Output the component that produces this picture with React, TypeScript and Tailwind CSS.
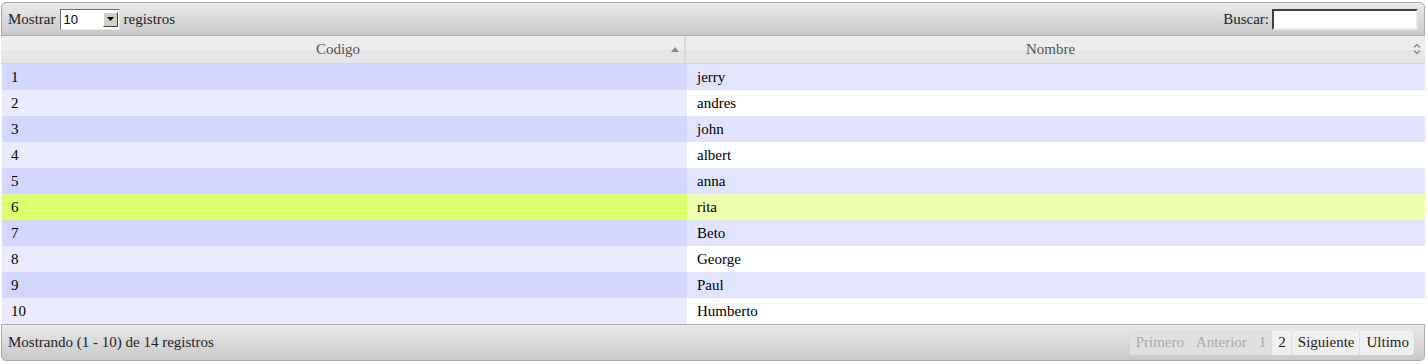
import React from "react";

const rows = [
  ["1", "jerry"],
  ["2", "andres"],
  ["3", "john"],
  ["4", "albert"],
  ["5", "anna"],
  ["6", "rita"],
  ["7", "Beto"],
  ["8", "George"],
  ["9", "Paul"],
  ["10", "Humberto"],
];

export default function App() {
  return (
    <div className="w-[1428px] h-[364px] bg-white pt-[2px] pl-[1px] text-[15px] leading-[17px] text-[#222] font-['Liberation_Serif','Times_New_Roman',serif]">
      <div className="w-[1424px]">
        {/* top toolbar */}
        <div className="h-[34px] flex items-center justify-between pl-[6px] pr-[6px] border border-[#aaaaaa] rounded-t-[5px] bg-[linear-gradient(#eaeaea,#c9c9c9)]">
          <div className="flex items-center gap-[4px]">
            <span>Mostrar</span>
            <div className="w-[60px] h-[21px] bg-white border border-t-[#6e6e6e] border-l-[#6e6e6e] border-b-[#e8e8e8] border-r-[#e8e8e8] flex items-center justify-between pl-[3px] pr-[1px]">
              <span className="text-[13px] text-black font-['Liberation_Sans',Arial,sans-serif]">10</span>
              <div className="w-[15px] h-[15px] bg-[#d4d0c8] border border-t-white border-l-white border-b-[#404040] border-r-[#404040] flex items-center justify-center">
                <svg width="7" height="4" viewBox="0 0 7 4"><path d="M0 0h7L3.5 4z" fill="#000" /></svg>
              </div>
            </div>
            <span>registros</span>
          </div>
          <div className="flex items-center gap-[3px]">
            <span>Buscar:</span>
            <div className="w-[146px] h-[21px] bg-white border-2 border-t-[#404040] border-l-[#404040] border-b-[#e8e8e8] border-r-[#e8e8e8]" />
          </div>
        </div>
        {/* header */}
        <div className="flex h-[28px] border-b border-[#d3d3d3] bg-[linear-gradient(#ededed_0%,#ededed_50%,#e6e6e6_50%,#e6e6e6_100%)] text-[#555]">
          <div className="w-[684px] ml-[1px] pr-[10px] flex items-center justify-center relative border-r-2 border-[#d8d8d8]">
            <span>Codigo</span>
            <svg className="absolute right-[5px] top-[11px]" width="8" height="5" viewBox="0 0 8 5"><path d="M0 5L4 0L8 5z" fill="#888" /></svg>
          </div>
          <div className="flex-1 pr-[10px] flex items-center justify-center relative">
            <span>Nombre</span>
            <svg className="absolute right-[4px] top-[7px]" width="8" height="12" viewBox="0 0 8 12"><path d="M1 4.5L4 1.5L7 4.5M1 7.5L4 10.5L7 7.5" fill="none" stroke="#888" strokeWidth="1.3" /></svg>
          </div>
        </div>
        {/* rows */}
        {rows.map(([c, n], i) => {
          const odd = i % 2 === 0;
          const hl = c === "6";
          const left = hl ? "bg-[#dcff70]" : odd ? "bg-[#d3d6ff]" : "bg-[#eaebff]";
          const right = hl ? "bg-[#eeffb0]" : odd ? "bg-[#e2e4ff]" : "bg-white";
          return (
            <div key={c} className="flex h-[26px] text-black">
              <div className={`w-[685px] ml-[1px] pl-[9px] flex items-center ${left}`}>{c}</div>
              <div className={`flex-1 pl-[10px] flex items-center ${right}`}>{n}</div>
            </div>
          );
        })}
        {/* footer */}
        <div className="h-[37px] flex items-center justify-between pl-[6px] pr-[10px] border border-[#aaaaaa] rounded-b-[5px] bg-[linear-gradient(#eaeaea,#c9c9c9)]">
          <span>Mostrando (1 - 10) de 14 registros</span>
          <div className="flex h-[24px] rounded-[3px] overflow-hidden">
            {[
              ["Primero", true],
              ["Anterior", true],
              ["1", true],
              ["2", false],
              ["Siguiente", false],
              ["Ultimo", false],
            ].map(([t, dis]) => (
              <div
                key={t as string}
                className={`pl-[6px] pr-[5px] flex items-center border-r border-[#dcdcdc] last:border-r-0 ${dis ? "bg-[#e0e0e0] text-[#aaaaaa]" : "bg-[#f0f0f0] text-[#222]"}`}
              >
                {t as string}
              </div>
            ))}
          </div>
        </div>
      </div>
    </div>
  );
}
